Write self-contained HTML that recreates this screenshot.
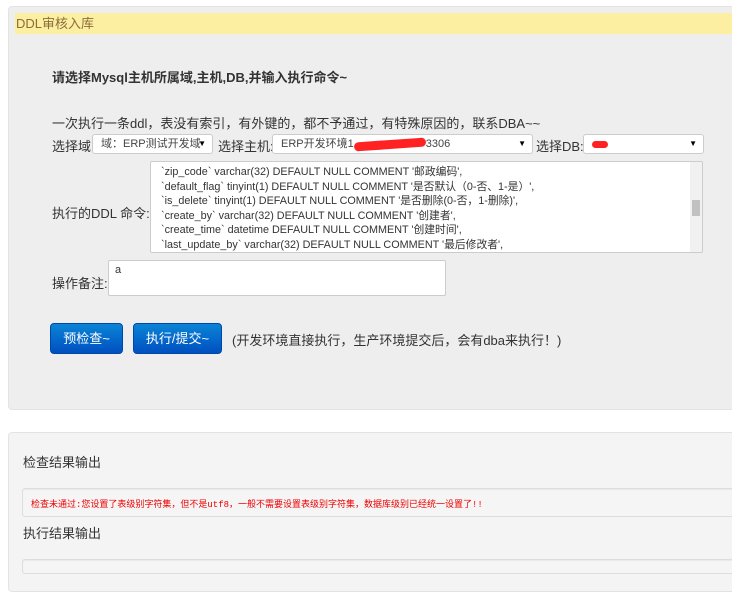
<!DOCTYPE html>
<html><head><meta charset="utf-8"><style>
*{box-sizing:border-box;margin:0;padding:0}
body{width:732px;height:582px;overflow:hidden;background:#fff;font-family:"Liberation Sans","Noto Sans CJK SC",sans-serif;font-size:13px;color:#333;position:relative}
.a{position:absolute;white-space:nowrap}
.p1{left:8px;top:6px;width:740px;height:404px;background:#eee;border:1px solid #e3e3e3;border-radius:4px}
.hd{left:15px;top:13px;width:730px;height:21px;background:#fcefa1;color:#8a6d3b;font-size:13px;line-height:21px;padding-left:1px}
.sel{background:#fff;border:1px solid #ccc;border-radius:3px;height:20px;font-size:11px;line-height:18px;padding-left:8px;color:#444}
.sel:after{content:"▼";position:absolute;right:6px;top:0;font-size:8px;color:#000}
.ta{background:#fff;border:1px solid #ccc;border-radius:2px}
.btn{background:linear-gradient(#0a84d6,#0050c0);border:1px solid #0048a8;border-radius:4px;color:#fff;text-align:center;line-height:29px;font-size:13px}
.code{font-size:10.8px;line-height:14.5px;color:#333;white-space:nowrap}
.p2{left:8px;top:432px;width:740px;height:160px;background:#f4f4f4;border:1px solid #e3e3e3;border-radius:4px}
.box{background:#f5f5f5;border:1px solid #ddd;border-radius:3px;box-shadow:inset 0 1px 1px rgba(0,0,0,.05)}
.red{color:#e00;font-family:"Liberation Mono","Noto Sans CJK SC",monospace;font-size:9px}
</style></head><body>
<div class="a p1"></div>
<div class="a hd">DDL审核入库</div>
<div class="a" style="left:52px;top:67px;font-weight:bold;font-size:13px">请选择Mysql主机所属域,主机,DB,并输入执行命令~</div>
<div class="a" style="left:52px;top:113px">一次执行一条ddl，表没有索引，有外键的，都不予通过，有特殊原因的，联系DBA~~</div>
<div class="a" style="left:52px;top:136px">选择域:</div>
<div class="a sel" style="left:92px;top:134px;width:121px">域：ERP测试开发域</div>
<div class="a" style="left:218px;top:136px">选择主机:</div>
<div class="a sel" style="left:272px;top:134px;width:261px">ERP开发环境1<span style="display:inline-block;width:72px;height:9px;background:#f22;border-radius:6px;vertical-align:middle;transform:rotate(-4deg)"></span>3306</div>
<div class="a" style="left:536px;top:136px">选择DB:</div>
<div class="a sel" style="left:583px;top:134px;width:121px"><span style="display:inline-block;width:16px;height:7px;background:#f22;border-radius:4px;vertical-align:middle"></span></div>
<div class="a" style="left:52px;top:203px">执行的DDL 命令:</div>
<div class="a ta" style="left:150px;top:161px;width:553px;height:92px;overflow:hidden">
<div class="code" style="position:absolute;left:10px;top:3px">`zip_code` varchar(32) DEFAULT NULL COMMENT '邮政编码',<br>`default_flag` tinyint(1) DEFAULT NULL COMMENT '是否默认（0-否、1-是）',<br>`is_delete` tinyint(1) DEFAULT NULL COMMENT '是否删除(0-否，1-删除)',<br>`create_by` varchar(32) DEFAULT NULL COMMENT '创建者',<br>`create_time` datetime DEFAULT NULL COMMENT '创建时间',<br>`last_update_by` varchar(32) DEFAULT NULL COMMENT '最后修改者',</div>
<div style="position:absolute;right:0;top:0;width:12px;height:90px;background:#f1f1f1"><div style="position:absolute;left:2px;top:38px;width:8px;height:16px;background:#c1c1c1"></div></div>
</div>
<div class="a" style="left:52px;top:273px">操作备注:</div>
<div class="a ta" style="left:108px;top:260px;width:338px;height:36px;font-size:11px;padding:3px 6px">a</div>
<div class="a btn" style="left:50px;top:323px;width:73px;height:31px">预检查~</div>
<div class="a btn" style="left:133px;top:323px;width:89px;height:31px">执行/提交~</div>
<div class="a" style="left:232px;top:330px">(开发环境直接执行，生产环境提交后，会有dba来执行！)</div>
<div class="a p2"></div>
<div class="a" style="left:23px;top:452px;font-size:13px;color:#333">检查结果输出</div>
<div class="a box" style="left:22px;top:488px;width:720px;height:29px"><span class="red" style="position:absolute;left:8px;top:8px">检查未通过:您设置了表级别字符集，但不是utf8，一般不需要设置表级别字符集，数据库级别已经统一设置了!!</span></div>
<div class="a" style="left:23px;top:523px;font-size:13px;color:#333">执行结果输出</div>
<div class="a box" style="left:22px;top:559px;width:720px;height:15px"></div>
</body></html>
